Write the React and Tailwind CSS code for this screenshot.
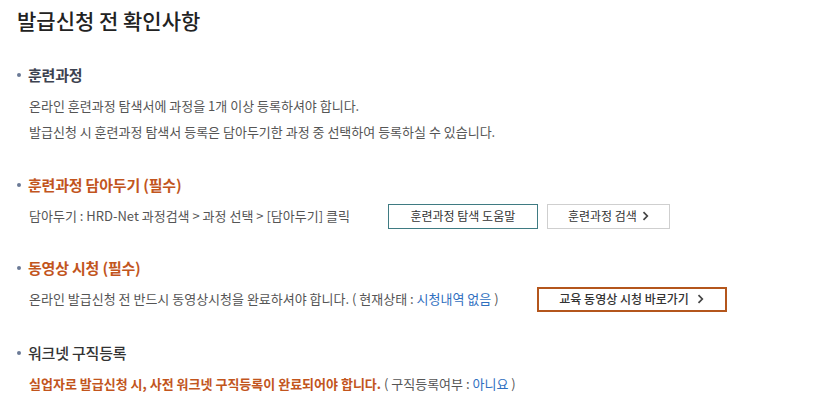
import React from "react";

const font = { fontFamily: '"Noto Sans CJK KR", "Noto Sans", sans-serif' };

function Chevron({ className = "" }) {
  return (
    <svg width="7" height="10" viewBox="0 0 7 10" className={className} fill="none">
      <path d="M1.5 1.2 L5.3 5 L1.5 8.8" stroke="#444" strokeWidth="1.7" />
    </svg>
  );
}

function Heading({ children, color = "text-[#3d4250]", weight = "font-bold" }) {
  return (
    <div className="flex items-center h-[24px]">
      <span className="w-[4px] h-[4px] rounded-full bg-[#6b7a96] ml-[17px] mr-[7px]" />
      <span className={`text-[15px] tracking-[-0.2px] ${weight} ${color}`}>{children}</span>
    </div>
  );
}

export default function App() {
  return (
    <div className="w-[824px] h-[414px] bg-white overflow-hidden text-[#555]" style={font}>
      <div className="leading-[40px] pl-[17px] text-[21px] font-medium text-[#222] tracking-[0px]">
        발급신청 전 확인사항
      </div>

      <div className="mt-[23px]">
        <Heading>훈련과정</Heading>
        <div className="mt-[6px] pl-[29px] text-[13px] leading-[26px]">
          <div>온라인 훈련과정 탐색서에 과정을 1개 이상 등록하셔야 합니다.</div>
          <div>발급신청 시 훈련과정 탐색서 등록은 담아두기한 과정 중 선택하여 등록하실 수 있습니다.</div>
        </div>
      </div>

      <div className="mt-[28px]">
        <Heading color="text-[#c2551d]">훈련과정 담아두기 (필수)</Heading>
        <div className="mt-[6px] pl-[29px] flex items-center h-[26px] text-[13px]">
          <span>담아두기 : HRD-Net 과정검색 &gt; 과정 선택 &gt; [담아두기] 클릭</span>
          <div className="ml-[38px] flex gap-[9px]">
            <button className="w-[150px] h-[25px] border border-[#3f7b82] bg-white text-[12px] text-[#333] flex items-center justify-center">
              훈련과정 탐색 도움말
            </button>
            <button className="w-[123px] h-[25px] border border-[#cfcfcf] bg-white text-[12px] text-[#333] flex items-center justify-center gap-[5px]">
              훈련과정 검색
              <Chevron />
            </button>
          </div>
        </div>
      </div>

      <div className="mt-[27px]">
        <Heading color="text-[#c2551d]">동영상 시청 (필수)</Heading>
        <div className="mt-[6px] pl-[29px] flex items-center h-[26px] text-[13px]">
          <span>
            온라인 발급신청 전 반드시 동영상시청을 완료하셔야 합니다. ( 현재상태 :{" "}
            <span className="text-[#2f6fbf]">시청내역 없음</span> )
          </span>
          <button className="ml-[38px] w-[190px] h-[25px] border-2 border-[#b4561c] bg-white text-[12px] font-medium text-[#333] flex items-center justify-center gap-[8px]">
            교육 동영상 시청 바로가기
            <Chevron />
          </button>
        </div>
      </div>

      <div className="mt-[29px]">
        <Heading weight="font-medium" color="text-[#333]">워크넷 구직등록</Heading>
        <div className="mt-[6px] pl-[29px] flex items-center h-[26px] text-[13px]">
          <span>
            <span className="font-bold text-[#c2551d]">실업자로 발급신청 시, 사전 워크넷 구직등록이 완료되어야 합니다.</span>{" "}
            ( 구직등록여부 : <span className="text-[#2f6fbf]">아니요</span> )
          </span>
        </div>
      </div>
    </div>
  );
}
